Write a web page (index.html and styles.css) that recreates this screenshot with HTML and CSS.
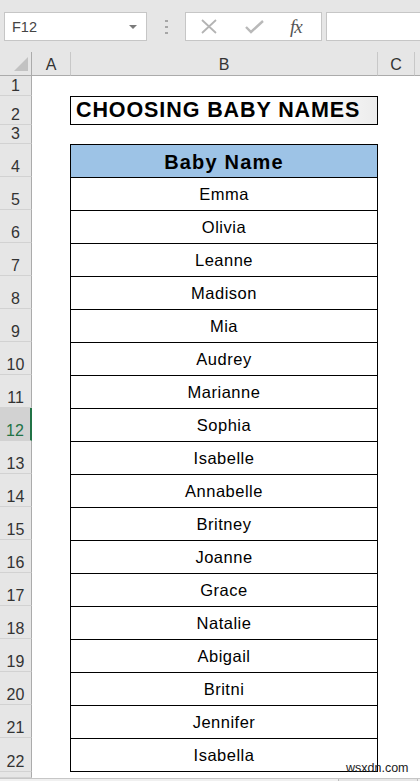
FILE: index.html
```html
<!DOCTYPE html>
<html lang="en">
<head>
  <meta charset="UTF-8" />
  <title>Choosing Baby Names</title>
  <link rel="stylesheet" href="styles.css">
</head>
<body>

  <div class="formula-bar">
    <div class="name-box">
      <span>F12</span>
      <span class="caret"></span>
    </div>
    <div class="grip"><i></i><i></i><i></i></div>
    <div class="fx-box">
      <svg class="icon" width="18" height="15" viewBox="0 0 18 15">
        <path d="M2 1 L16 14 M16 1 L2 14" stroke="#b4b4b4" stroke-width="1.8" fill="none"/>
      </svg>
      <svg class="icon" width="19" height="15" viewBox="0 0 19 15">
        <path d="M1 8 L6 13 L18 2" stroke="#b9b9b9" stroke-width="2.4" fill="none"/>
      </svg>
      <span class="fx">fx</span>
    </div>
    <div class="formula-input"></div>
  </div>

  <div class="sheet">
    <div class="col-head corner">
      <svg width="14" height="14" viewBox="0 0 14 14"><polygon points="14,0 14,14 0,14" fill="#c2c2c2"/></svg>
    </div>
    <div class="col-head">A</div>
    <div class="col-head">B</div>
    <div class="col-head">C</div>
    <div class="col-head last"></div>

    <div class="row-head">1</div>
    <div class="row-head">2</div>
    <div class="title-cell">CHOOSING BABY NAMES</div>
    <div class="row-head">3</div>
    <div class="row-head">4</div>
    <div class="name-cell table-head">Baby Name</div>
    <div class="row-head">5</div>
    <div class="name-cell">Emma</div>
    <div class="row-head">6</div>
    <div class="name-cell">Olivia</div>
    <div class="row-head">7</div>
    <div class="name-cell">Leanne</div>
    <div class="row-head">8</div>
    <div class="name-cell">Madison</div>
    <div class="row-head">9</div>
    <div class="name-cell">Mia</div>
    <div class="row-head">10</div>
    <div class="name-cell">Audrey</div>
    <div class="row-head">11</div>
    <div class="name-cell">Marianne</div>
    <div class="row-head selected">12</div>
    <div class="name-cell">Sophia</div>
    <div class="row-head">13</div>
    <div class="name-cell">Isabelle</div>
    <div class="row-head">14</div>
    <div class="name-cell">Annabelle</div>
    <div class="row-head">15</div>
    <div class="name-cell">Britney</div>
    <div class="row-head">16</div>
    <div class="name-cell">Joanne</div>
    <div class="row-head">17</div>
    <div class="name-cell">Grace</div>
    <div class="row-head">18</div>
    <div class="name-cell">Natalie</div>
    <div class="row-head">19</div>
    <div class="name-cell">Abigail</div>
    <div class="row-head">20</div>
    <div class="name-cell">Britni</div>
    <div class="row-head">21</div>
    <div class="name-cell">Jennifer</div>
    <div class="row-head">22</div>
    <div class="name-cell last-row">Isabella</div>
    <div class="row-head"></div>
  </div>

  <div class="tabs-bar">
    <div class="tabs-left"></div>
    <div class="tabs-gap"></div>
    <div class="tabs-right"></div>
  </div>

  <div class="watermark">wsxdn.com</div>

</body>
</html>
```

FILE: styles.css
```css
body {
  margin: 0;
  padding: 0;
  width: 420px;
  height: 781px;
  overflow: hidden;
  background-color: #fff;
  font-family: 'Liberation Sans', Arial, sans-serif;
  position: relative;
}

/* formula bar */
.formula-bar {
  display: flex;
  align-items: flex-start;
  height: 52px;
  box-sizing: border-box;
  padding-top: 12px;
  background-color: #e6e6e6;
}

.name-box {
  display: flex;
  align-items: center;
  justify-content: space-between;
  box-sizing: border-box;
  width: 143px;
  height: 29px;
  margin-left: 4px;
  padding: 0 9px 0 7px;
  background: #fff;
  border: 1px solid #c6c6c6;
  color: #444;
  font-size: 14.5px;
}

.caret {
  width: 0;
  height: 0;
  border-left: 4px solid transparent;
  border-right: 4px solid transparent;
  border-top: 4px solid #7a7a7a;
}

.grip {
  display: flex;
  flex-direction: column;
  gap: 4px;
  width: 38px;
  padding-top: 8px;
  align-items: center;
}

.grip i {
  width: 3px;
  height: 2px;
  background: #a6a6a6;
}

.fx-box {
  display: flex;
  align-items: center;
  box-sizing: border-box;
  width: 137px;
  height: 29px;
  padding-left: 14px;
  gap: 27px;
  background: #fff;
  border: 1px solid #c6c6c6;
}

.fx {
  font-family: 'Liberation Serif', 'Times New Roman', serif;
  font-style: italic;
  font-size: 19px;
  color: #555;
  margin-left: -1px;
  letter-spacing: -1px;
}

.formula-input {
  flex: 1;
  height: 29px;
  margin-left: 4px;
  box-sizing: border-box;
  background: #fff;
  border: 1px solid #c6c6c6;
  border-right: none;
}

/* sheet grid */
.sheet {
  display: grid;
  grid-template-columns: 32px 39px 307px 37px 1fr;
  grid-template-rows: 24px 20px 29px 19px repeat(18, 33px) 34px 6px;
  background: #fff;
}

.col-head {
  display: flex;
  align-items: center;
  justify-content: center;
  padding-top: 3px;
  box-sizing: border-box;
  background: #e6e6e6;
  border-right: 1px solid #c8c8c8;
  border-bottom: 1px solid #ababab;
  color: #333;
  font-size: 16px;
}

.col-head.corner {
  justify-content: flex-end;
  align-items: flex-end;
  padding: 0 3px 4px 0;
  border-right-color: #ababab;
}

.col-head.last {
  border-right: none;
}

.row-head {
  grid-column: 1;
  display: flex;
  align-items: flex-end;
  justify-content: center;
  padding-bottom: 1px;
  box-sizing: border-box;
  background: #e6e6e6;
  border-right: 1px solid #ababab;
  border-bottom: 1px solid #d2d2d2;
  color: #333;
  font-size: 16px;
  line-height: 1;
}

.row-head.selected {
  background: #d2d2d2;
  color: #217346;
  border-right: 2px solid #217346;
}

.title-cell {
  grid-column: 3;
  margin-left: -1px;
  display: flex;
  align-items: center;
  padding-left: 5px;
  box-sizing: border-box;
  border: 1px solid #000;
  background: linear-gradient(to right, #fff 0%, #fff 75%, #ececec 100%);
  font-size: 21.5px;
  font-weight: bold;
  letter-spacing: 0.9px;
  color: #000;
}

.name-cell {
  grid-column: 3;
  margin-left: -1px;
  display: flex;
  align-items: center;
  justify-content: center;
  box-sizing: border-box;
  border: 1px solid #000;
  border-bottom: none;
  padding-top: 1px;
  font-size: 16.5px;
  letter-spacing: 0.5px;
  color: #000;
}

.name-cell.table-head {
  background: #9dc3e6;
  font-size: 20px;
  font-weight: bold;
  letter-spacing: 1.2px;
  padding-top: 2px;
}

.name-cell.last-row {
  border-bottom: 1px solid #000;
}

/* bottom bar */
.tabs-bar {
  display: flex;
  height: 3px;
  background: #e6e6e6;
  border-top: 1px solid #c6c6c6;
}

.tabs-left {
  width: 338px;
  background: #f0f0f0;
  border-right: 1px solid #bdbdbd;
}

.tabs-gap {
  width: 78px;
}

.tabs-right {
  flex: 1;
  background: #f0f0f0;
  border-left: 1px solid #bdbdbd;
}

.watermark {
  position: absolute;
  left: 346px;
  top: 762px;
  font-size: 12.5px;
  line-height: 1;
  color: #222;
}
```
